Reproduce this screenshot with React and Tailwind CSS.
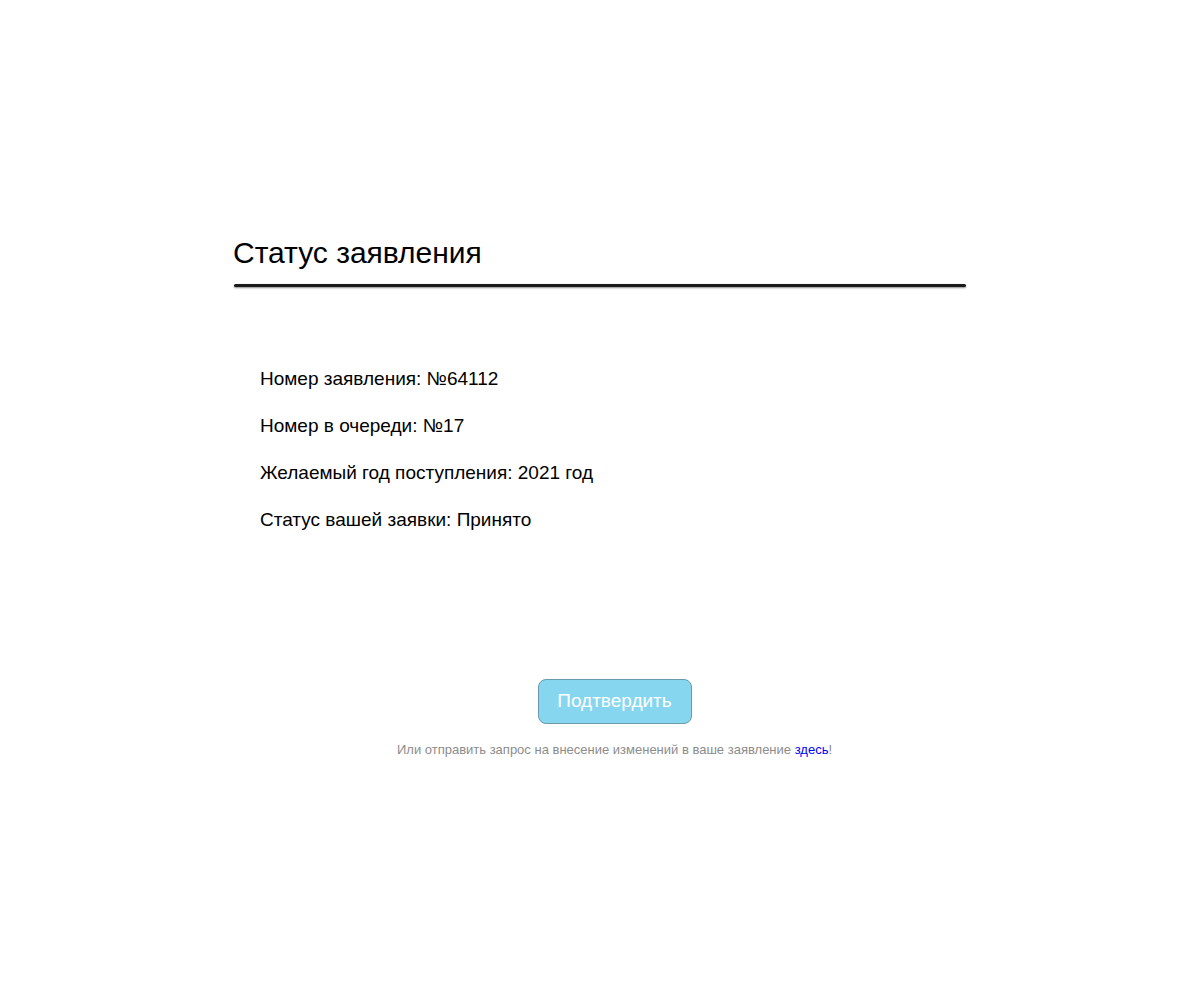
export default function App() {
  const rows = [
    "Номер заявления: №64112",
    "Номер в очереди: №17",
    "Желаемый год поступления: 2021 год",
    "Статус вашей заявки: Принято",
  ];

  return (
    <div className="min-h-[1000px] bg-white font-['Liberation_Sans',Arial,sans-serif] text-black">
      <div className="mx-auto w-[734px] pt-[236px]">
        {/* Title */}
        <h1 className="text-[30px] leading-[34px]">Статус заявления</h1>
        <div className="mx-px mt-[14px] h-[3px] rounded-full bg-[#1a1a1a] shadow-[0_1px_2px_rgba(0,0,0,0.45)]" />

        {/* Info */}
        <div className="pl-[27px] pt-[81px] flex flex-col gap-[25px]">
          {rows.map((r) => (
            <p key={r} className="text-[19px] leading-[22px]">{r}</p>
          ))}
        </div>

        {/* Actions */}
        <div className="pl-[29px] pt-[148px] flex flex-col items-center">
          <button className="w-[154px] h-[45px] rounded-[8px] border border-[#6b9aab] bg-[#87d6f0] text-white text-[19px]">
            Подтвердить
          </button>
          <p className="mt-[18px] text-[13px] leading-[16px] text-[#8c8c8c]">
            Или отправить запрос на внесение изменений в ваше заявление{" "}
            <a href="#" className="text-[#0000ff]">здесь</a>!
          </p>
        </div>
      </div>
    </div>
  );
}
